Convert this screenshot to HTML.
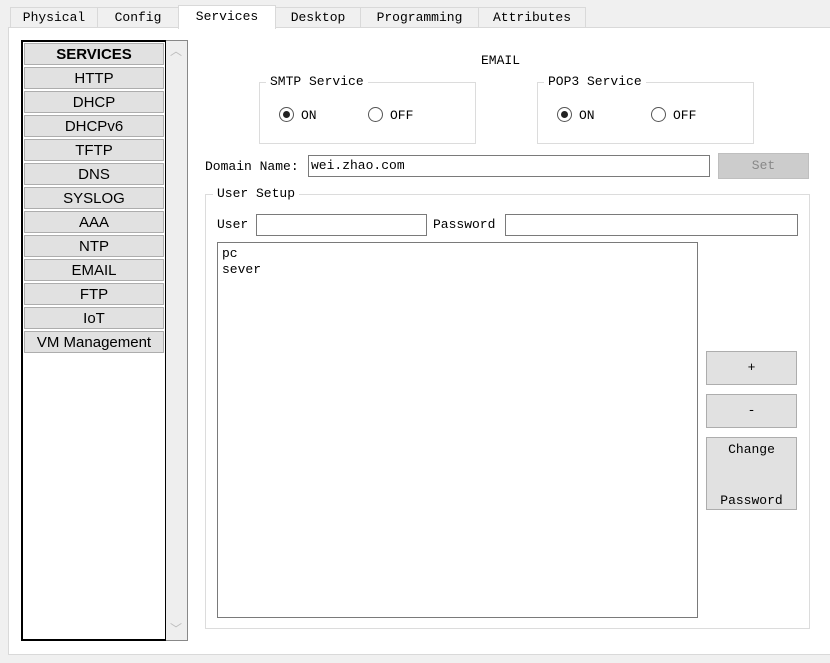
<!DOCTYPE html>
<html><head><style>
*{box-sizing:border-box;margin:0;padding:0}
body{width:830px;height:663px;background:#f0f0f0;position:relative;overflow:hidden;font-family:"Liberation Mono","Noto Sans CJK SC",monospace;font-size:13px;color:#000}
.a{position:absolute}
.tab{position:absolute;top:7px;height:21px;border:1px solid #d9d9d9;border-bottom:none;background:#f0f0f0;text-align:center;line-height:20px;font-size:13px}
.panel{position:absolute;left:8px;top:27px;width:830px;height:628px;background:#fff;border:1px solid #d9d9d9;border-right:none}
.item{position:absolute;left:24px;width:140px;height:22px;background:#e1e1e1;border:1px solid #adadad;text-align:center;font-family:"Liberation Sans",sans-serif;font-size:15px;line-height:22px}
.grp{position:absolute;border:1px solid #dcdcdc}
.lg{position:absolute;background:#fff;padding:0 4px;top:-9px;left:6px;line-height:16px}
.rad{position:absolute;width:15px;height:15px;border:1px solid #555;border-radius:50%;background:#fff}
.rad.on::after{content:"";position:absolute;left:3px;top:3px;width:7px;height:7px;border-radius:50%;background:#222}
.inp{position:absolute;border:1px solid #7a7a7a;background:#fff;height:22px;line-height:20px;padding-left:2px}
.btn{position:absolute;background:#e1e1e1;border:1px solid #adadad;text-align:center}
</style></head><body>
<div class="tab" style="left:10px;width:88px">Physical</div>
<div class="tab" style="left:97px;width:82px">Config</div>
<div class="tab" style="left:275px;width:86px">Desktop</div>
<div class="tab" style="left:360px;width:119px">Programming</div>
<div class="tab" style="left:478px;width:108px">Attributes</div>
<div class="panel"></div>
<div class="tab" style="left:178px;top:5px;width:98px;height:24px;background:#fff;z-index:2;line-height:22px">Services</div>

<div class="a" style="left:21px;top:40px;width:146px;height:601px;border:2px solid #000;background:#fff"></div>
<div class="a" style="left:166px;top:40px;width:22px;height:601px;background:#eeeeee;border:1px solid #888;border-left:none"></div>
<div class="a" style="left:170px;top:42px;color:#bbb;font-size:12px;font-family:'Liberation Sans',sans-serif">︿</div>
<div class="a" style="left:170px;top:620px;color:#bbb;font-size:12px;font-family:'Liberation Sans',sans-serif">﹀</div>
<div class="item" style="top:43px;font-weight:bold">SERVICES</div>
<div class="item" style="top:67px">HTTP</div>
<div class="item" style="top:91px">DHCP</div>
<div class="item" style="top:115px">DHCPv6</div>
<div class="item" style="top:139px">TFTP</div>
<div class="item" style="top:163px">DNS</div>
<div class="item" style="top:187px">SYSLOG</div>
<div class="item" style="top:211px">AAA</div>
<div class="item" style="top:235px">NTP</div>
<div class="item" style="top:259px">EMAIL</div>
<div class="item" style="top:283px">FTP</div>
<div class="item" style="top:307px">IoT</div>
<div class="item" style="top:331px">VM Management</div>

<div class="a" style="left:481px;top:53px">EMAIL</div>
<div class="grp" style="left:259px;top:82px;width:217px;height:62px"><span class="lg">SMTP Service</span></div>
<div class="rad on" style="left:279px;top:107px"></div><div class="a" style="left:301px;top:108px">ON</div>
<div class="rad" style="left:368px;top:107px"></div><div class="a" style="left:390px;top:108px">OFF</div>
<div class="grp" style="left:537px;top:82px;width:217px;height:62px"><span class="lg">POP3 Service</span></div>
<div class="rad on" style="left:557px;top:107px"></div><div class="a" style="left:579px;top:108px">ON</div>
<div class="rad" style="left:651px;top:107px"></div><div class="a" style="left:673px;top:108px">OFF</div>

<div class="a" style="left:205px;top:159px">Domain Name:</div>
<div class="inp" style="left:308px;top:155px;width:402px">wei.zhao.com</div>
<div class="btn" style="left:718px;top:153px;width:91px;height:26px;background:#cccccc;border-color:#bfbfbf;color:#888;line-height:24px">Set</div>

<div class="grp" style="left:205px;top:194px;width:605px;height:435px"><span class="lg" style="left:7px">User Setup</span></div>
<div class="a" style="left:217px;top:217px">User</div>
<div class="inp" style="left:256px;top:214px;width:171px"></div>
<div class="a" style="left:433px;top:217px">Password</div>
<div class="inp" style="left:505px;top:214px;width:293px"></div>
<div class="a" style="left:217px;top:242px;width:481px;height:376px;border:1px solid #7a7a7a;background:#fff;padding:3px 4px;line-height:16px">pc<br>sever</div>
<div class="btn" style="left:706px;top:351px;width:91px;height:34px;line-height:32px">+</div>
<div class="btn" style="left:706px;top:394px;width:91px;height:34px;line-height:32px">-</div>
<div class="btn" style="left:706px;top:437px;width:91px;height:73px">
<div class="a" style="left:0;right:0;top:4px">Change</div>
<div class="a" style="left:0;right:0;top:55px">Password</div>
</div>
</body></html>
